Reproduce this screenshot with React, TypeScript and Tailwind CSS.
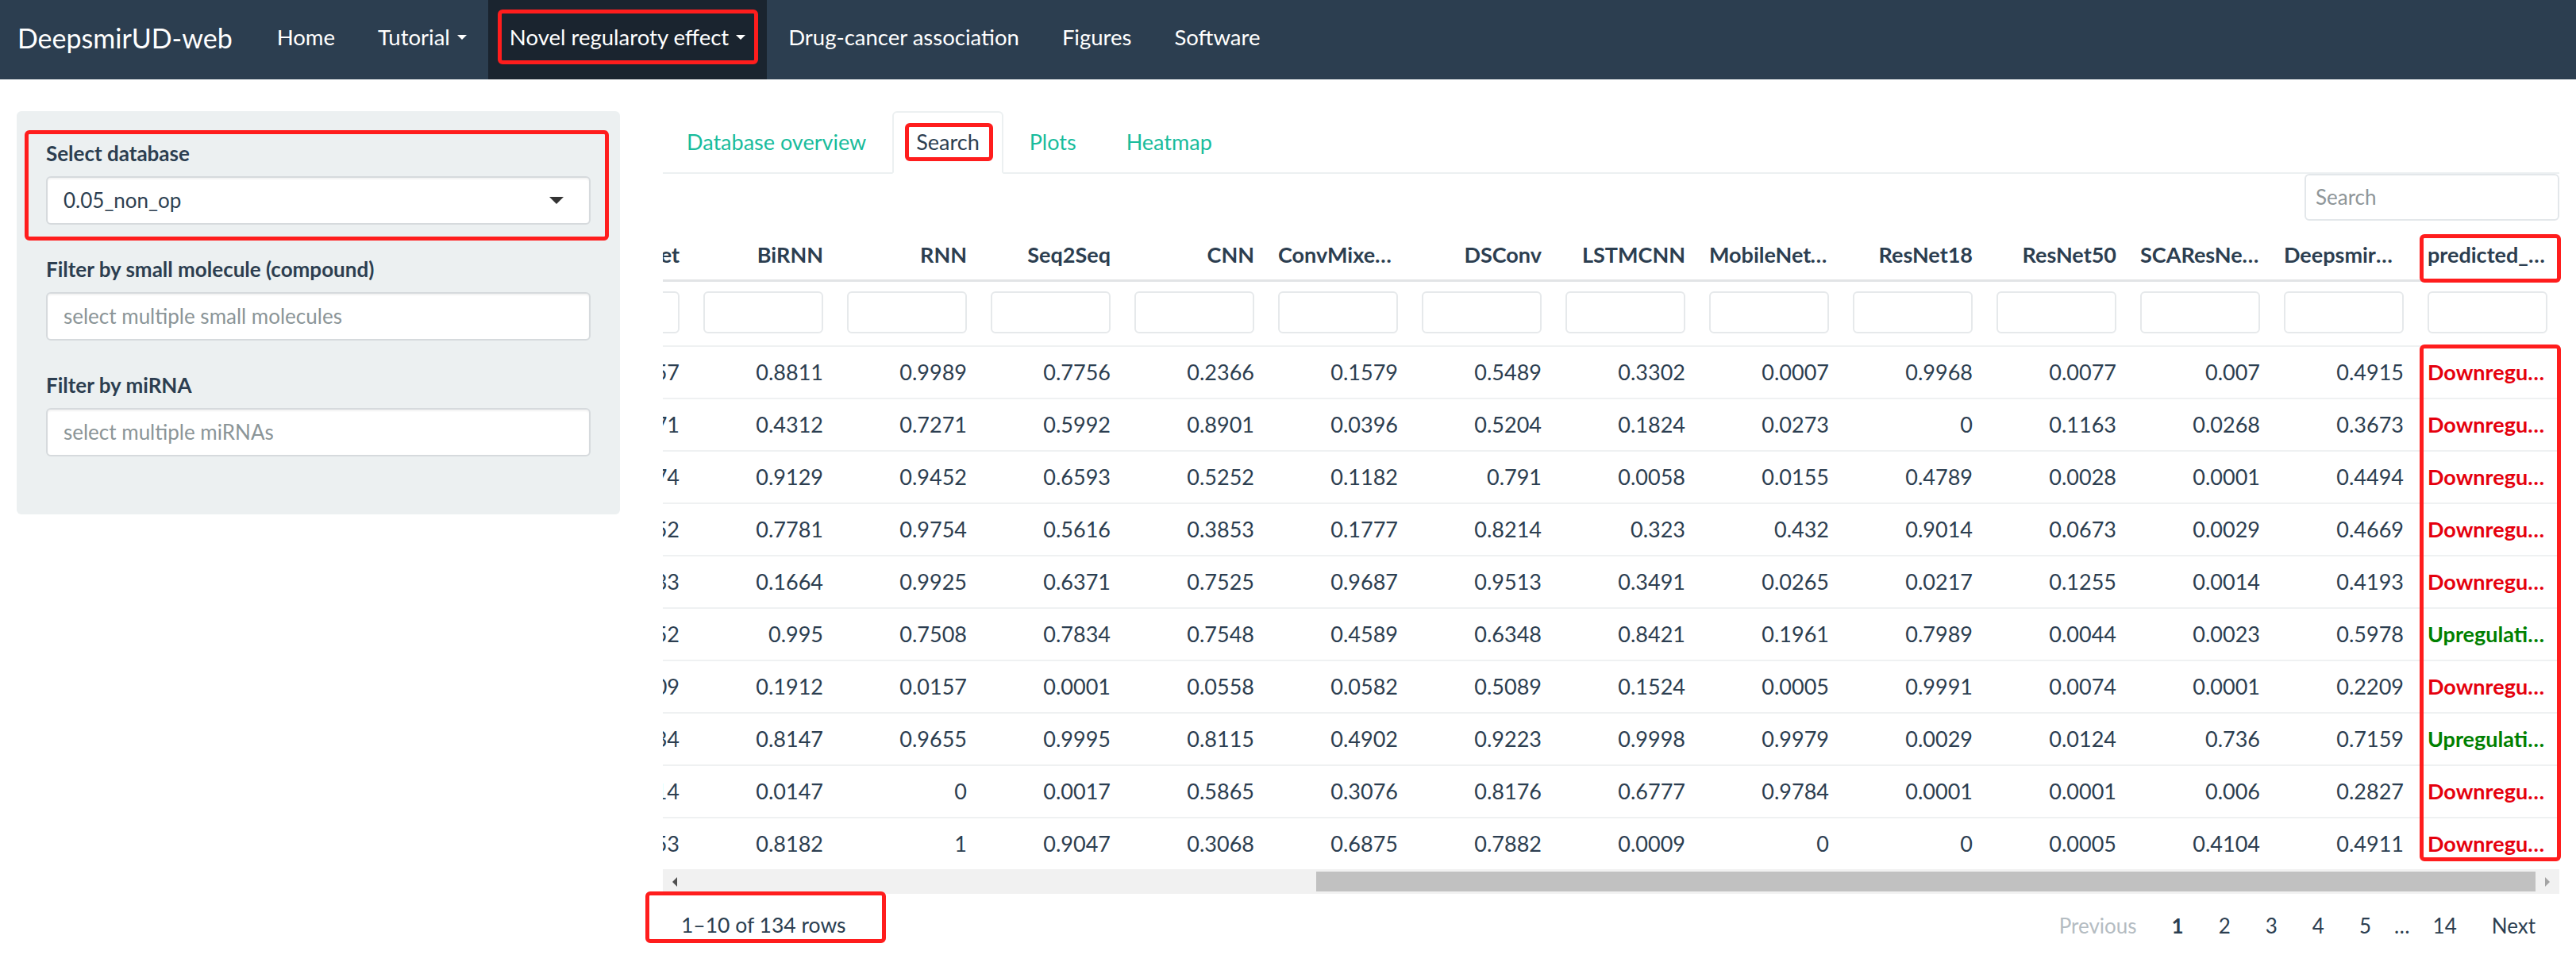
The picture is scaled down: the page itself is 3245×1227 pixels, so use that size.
import type { ReactNode } from 'react'

const RED = 'pointer-events-none absolute rounded-[6px] border-[5px] border-[#ff1d1d]'

const COLS = [
  'DenseNet',
  'BiRNN',
  'RNN',
  'Seq2Seq',
  'CNN',
  'ConvMixer64',
  'DSConv',
  'LSTMCNN',
  'MobileNetV2',
  'ResNet18',
  'ResNet50',
  'SCAResNet18',
  'DeepsmirUD_score',
  'predicted_effect',
]

const ROWS: string[][] = [
  ['0.6457', '0.8811', '0.9989', '0.7756', '0.2366', '0.1579', '0.5489', '0.3302', '0.0007', '0.9968', '0.0077', '0.007', '0.4915', 'Downregulation'],
  ['0.1271', '0.4312', '0.7271', '0.5992', '0.8901', '0.0396', '0.5204', '0.1824', '0.0273', '0', '0.1163', '0.0268', '0.3673', 'Downregulation'],
  ['0.5874', '0.9129', '0.9452', '0.6593', '0.5252', '0.1182', '0.791', '0.0058', '0.0155', '0.4789', '0.0028', '0.0001', '0.4494', 'Downregulation'],
  ['0.9052', '0.7781', '0.9754', '0.5616', '0.3853', '0.1777', '0.8214', '0.323', '0.432', '0.9014', '0.0673', '0.0029', '0.4669', 'Downregulation'],
  ['0.2433', '0.1664', '0.9925', '0.6371', '0.7525', '0.9687', '0.9513', '0.3491', '0.0265', '0.0217', '0.1255', '0.0014', '0.4193', 'Downregulation'],
  ['0.3852', '0.995', '0.7508', '0.7834', '0.7548', '0.4589', '0.6348', '0.8421', '0.1961', '0.7989', '0.0044', '0.0023', '0.5978', 'Upregulation'],
  ['0.7709', '0.1912', '0.0157', '0.0001', '0.0558', '0.0582', '0.5089', '0.1524', '0.0005', '0.9991', '0.0074', '0.0001', '0.2209', 'Downregulation'],
  ['0.0634', '0.8147', '0.9655', '0.9995', '0.8115', '0.4902', '0.9223', '0.9998', '0.9979', '0.0029', '0.0124', '0.736', '0.7159', 'Upregulation'],
  ['0.4514', '0.0147', '0', '0.0017', '0.5865', '0.3076', '0.8176', '0.6777', '0.9784', '0.0001', '0.0001', '0.006', '0.2827', 'Downregulation'],
  ['0.8853', '0.8182', '1', '0.9047', '0.3068', '0.6875', '0.7882', '0.0009', '0', '0', '0.0005', '0.4104', '0.4911', 'Downregulation'],
]

function Caret() {
  return <span className="ml-[9px] inline-block h-0 w-0 border-x-[6px] border-t-[6px] border-x-transparent border-t-white" />
}

function NavLink({ children, active }: { children: ReactNode; active?: boolean }) {
  return (
    <div className={`relative flex items-center px-[27px] pb-[6px] ${active ? 'bg-[#1a242f]' : ''}`}>
      {children}
      {active && <span className={`${RED} left-[12px] right-[11px] top-[12px] bottom-[19px]`} />}
    </div>
  )
}

function Field({ label, children, boxed }: { label: string; children: ReactNode; boxed?: boolean }) {
  return (
    <div className="relative mb-[38px]">
      <div className="text-[26px] font-bold leading-[37px]">{label}</div>
      <div className="mt-[10px] flex h-[61px] items-center rounded-[6px] border-2 border-[#d6dadd] bg-white px-[20px] shadow-[inset_0_2px_2px_rgba(0,0,0,0.05)]">
        {children}
      </div>
      {boxed && <span className={`${RED} -left-[27px] -right-[23px] -top-[11px] -bottom-[20px]`} />}
    </div>
  )
}

function Sidebar() {
  return (
    <div className="w-[760px] shrink-0 self-start rounded-[6px] bg-[#ecf0f1] px-[37px] pt-[35px] pb-[35px]">
      <Field label="Select database" boxed>
        <span className="flex-1 text-[26px]">0.05_non_op</span>
        <span className="mr-[12px] h-0 w-0 border-x-[9px] border-t-[9px] border-x-transparent border-t-[#333]" />
      </Field>
      <Field label="Filter by small molecule (compound)">
        <span className="text-[26px] text-[#8b9598]">select multiple small molecules</span>
      </Field>
      <Field label="Filter by miRNA">
        <span className="text-[26px] text-[#8b9598]">select multiple miRNAs</span>
      </Field>
    </div>
  )
}

function Tabs() {
  const tabs = ['Database overview', 'Search', 'Plots', 'Heatmap']
  return (
    <div className="flex border-b-2 border-[#ecf0f1]">
      {tabs.map((t) => {
        const active = t === 'Search'
        return (
          <div key={t} className="relative mr-[3px] -mb-[2px]">
            <div
              className={`flex h-[79px] items-center rounded-t-[6px] border-2 px-[28px] text-[27px] ${
                active ? 'border-[#ecf0f1] border-b-white bg-white text-[#2c3e50]' : 'border-transparent text-[#18bc9c]'
              }`}
            >
              {t}
            </div>
            {active && <span className={`${RED} left-[16px] right-[13px] top-[15px] bottom-[16px]`} />}
          </div>
        )
      })}
    </div>
  )
}

function DataTable() {
  const last = COLS.length - 1
  return (
    <div className="relative mt-[13px] text-[27px]">
      <div className="overflow-hidden">
        <div className="-ml-[145px] w-[2534px]">
          <div className="grid h-[64px] grid-cols-[repeat(14,181px)] items-center border-b-[3px] border-[#e2e4e6] font-bold">
            {COLS.map((c, i) => (
              <div key={c} className={`truncate px-[15px] ${i === last ? 'text-left' : 'text-right'}`}>
                {c}
              </div>
            ))}
          </div>
          <div className="grid h-[80px] grid-cols-[repeat(14,181px)] pt-[12px]">
            {COLS.map((c) => (
              <div key={c} className="px-[15px]">
                <div className="h-[53px] rounded-[6px] border-2 border-[#e6e9eb] bg-white" />
              </div>
            ))}
          </div>
          {ROWS.map((r, ri) => (
            <div key={ri} className="grid h-[66px] grid-cols-[repeat(14,181px)] items-center border-t-2 border-[#eff1f2]">
              {r.map((v, i) =>
                i === last ? (
                  <div
                    key={i}
                    className={`truncate px-[15px] text-left font-bold ${v.startsWith('Up') ? 'text-[#008000]' : 'text-[#e5000d]'}`}
                  >
                    {v}
                  </div>
                ) : (
                  <div key={i} className="truncate px-[15px] text-right">
                    {v}
                  </div>
                ),
              )}
            </div>
          ))}
        </div>
      </div>
      {/* horizontal scrollbar, scrolled all the way right */}
      <div className="flex h-[31px] items-center bg-[#f1f1f1]">
        <div className="flex w-[30px] justify-center">
          <span className="h-0 w-0 border-y-[6px] border-r-[6px] border-y-transparent border-r-[#505050]" />
        </div>
        <div className="flex flex-1">
          <div className="ml-auto h-[25px] w-[1536px] bg-[#c1c1c1]" />
        </div>
        <div className="flex w-[30px] justify-center">
          <span className="h-0 w-0 border-y-[6px] border-l-[6px] border-y-transparent border-l-[#a3a3a3]" />
        </div>
      </div>
      <span className={`${RED} -right-[2px] top-[4px] h-[61px] w-[178px]`} />
      <span className={`${RED} -right-[2px] top-[143px] h-[651px] w-[178px]`} />
    </div>
  )
}

function Footer() {
  const pages = ['1', '2', '3', '4', '5']
  return (
    <div className="flex h-[80px] items-center justify-between">
      <div className="relative pl-[23px] text-[26.5px]">
        <span>1–10 of 134 rows</span>
        <span className={`${RED} -left-[22px] w-[303px] -top-[23px] h-[65px]`} />
      </div>
      <div className="flex items-center pr-[8px]">
        <span className="px-[22px] text-[#b4bcc2]">Previous</span>
        {pages.map((p) => (
          <span key={p} className={`px-[22px] ${p === '1' ? 'font-bold' : ''}`}>
            {p}
          </span>
        ))}
        <span className="px-[7px]">…</span>
        <span className="px-[22px]">14</span>
        <span className="px-[22px]">Next</span>
      </div>
    </div>
  )
}

export default function App() {
  return (
    <div className="min-h-screen bg-white font-[Lato,sans-serif] text-[26px] text-[#2c3e50]">
      <nav className="flex h-[100px] items-stretch bg-[#2c3e50] pl-[22px] text-[27.5px] text-white">
        <div className="mr-[29px] flex items-center pb-[6px] text-[34px]">DeepsmirUD-web</div>
        <NavLink>Home</NavLink>
        <NavLink>
          Tutorial
          <Caret />
        </NavLink>
        <NavLink active>
          Novel regularoty effect
          <Caret />
        </NavLink>
        <NavLink>Drug-cancer association</NavLink>
        <NavLink>Figures</NavLink>
        <NavLink>Software</NavLink>
      </nav>

      <div className="flex gap-[54px] px-[21px] pt-[40px]">
        <Sidebar />
        <div className="min-w-0 flex-1">
          <Tabs />
          <div className="flex justify-end">
            <div className="flex h-[59px] w-[321px] items-center rounded-[6px] border-2 border-[#e3e7ea] px-[12px] text-[#8f9699]">
              Search
            </div>
          </div>
          <DataTable />
          <Footer />
        </div>
      </div>
    </div>
  )
}
